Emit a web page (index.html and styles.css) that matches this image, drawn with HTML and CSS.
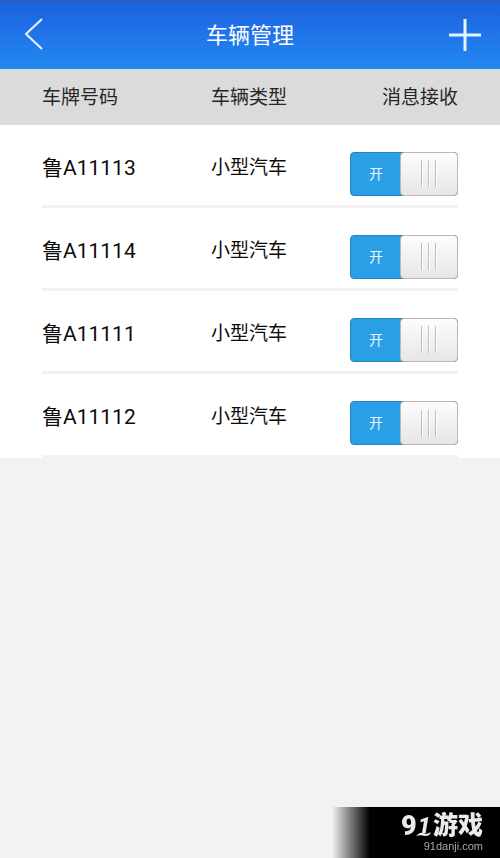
FILE: index.html
```html
<!DOCTYPE html>
<html lang="zh-CN">
<head>
<meta charset="utf-8">
<meta name="viewport" content="width=device-width, initial-scale=1">
<title>车辆管理</title>
<link rel="stylesheet" href="styles.css">
</head>
<body>
<header class="topbar">
  <button class="icon-btn" type="button" aria-label="返回">
    <svg width="20" height="34" viewBox="0 0 20 34"><path d="M17 1 L1 16 L17 31"/></svg>
  </button>
  <h1 class="title">车辆管理</h1>
  <button class="icon-btn" type="button" aria-label="添加">
    <svg class="plus" width="32" height="32" viewBox="0 0 32 32"><path d="M16 0V32M0 16H32"/></svg>
  </button>
</header>
<main class="panel">
  <table class="vehicles">
    <thead>
      <tr><th scope="col">车牌号码</th><th scope="col">车辆类型</th><th scope="col">消息接收</th></tr>
    </thead>
    <tbody>
      <tr>
        <td class="plate">鲁A11113</td><td>小型汽车</td>
        <td><label class="switch"><input type="checkbox" aria-label="鲁A11113 消息接收" checked><span class="state">开</span><span class="knob"><i></i><i></i><i></i></span></label></td>
      </tr>
      <tr>
        <td class="plate">鲁A11114</td><td>小型汽车</td>
        <td><label class="switch"><input type="checkbox" aria-label="鲁A11114 消息接收" checked><span class="state">开</span><span class="knob"><i></i><i></i><i></i></span></label></td>
      </tr>
      <tr>
        <td class="plate">鲁A11111</td><td>小型汽车</td>
        <td><label class="switch"><input type="checkbox" aria-label="鲁A11111 消息接收" checked><span class="state">开</span><span class="knob"><i></i><i></i><i></i></span></label></td>
      </tr>
      <tr>
        <td class="plate">鲁A11112</td><td>小型汽车</td>
        <td><label class="switch"><input type="checkbox" aria-label="鲁A11112 消息接收" checked><span class="state">开</span><span class="knob"><i></i><i></i><i></i></span></label></td>
      </tr>
    </tbody>
  </table>
</main>
<footer class="brand">
  <div class="brand-name">
    <svg width="32" height="38" viewBox="0 0 32 38">
      <text class="brand-nine" x="0" y="28">9</text>
      <text class="brand-one" x="17" y="26">1</text>
      <path d="M15 29c3-3 5-4 7-3 3 1 5 1 8-1-1 3-3 4-6 4-3-1-5-1-9 0z"/>
    </svg>
    <span>游戏</span>
  </div>
  <div class="brand-url">91danji.com</div>
</footer>
</body>
</html>
```
FILE: styles.css
```css
* { box-sizing: border-box; }

body {
  margin: 0;
  min-height: 100vh;
  background: #f2f2f2;
  color: #0c0c0c;
  font-family: Roboto, "Noto Sans CJK SC", sans-serif;
}

.topbar {
  display: flex;
  align-items: center;
  justify-content: space-between;
  height: 69px;
  padding: 0 16px;
  border-top: 1px solid #3557a0;
  background: linear-gradient(#1b62dc, #2070e8 40%, #2189f0);
  color: #fff;
}

.title {
  margin: 0;
  padding-top: 2px;
  font-size: 22px;
  font-weight: 400;
  line-height: 32px;
}

.icon-btn {
  display: flex;
  justify-content: center;
  align-items: center;
  width: 38px;
  height: 48px;
  padding: 0;
  border: 0;
  background: none;
}

.icon-btn svg {
  fill: none;
  stroke: #e6f6ff;
  stroke-width: 2;
}

.icon-btn .plus { stroke-width: 3; }

.panel { background: #fff; }

.vehicles {
  width: 100%;
  border-spacing: 0;
  table-layout: fixed;
}

.vehicles th,
.vehicles td {
  padding: 2px 0 0;
  font-size: 19px;
  font-weight: 400;
  line-height: 28px;
  text-align: left;
}

.vehicles th {
  height: 56px;
  background: #dbdbdb;
  color: #262626;
}

.vehicles th:first-child { width: 42.2%; }
.vehicles th:last-child { width: 32%; }

.vehicles th:first-child,
.vehicles td:first-child { padding-left: 42px; }

.vehicles th:last-child,
.vehicles td:last-child {
  padding-right: 42px;
  text-align: right;
}

.vehicles tbody tr {
  background: linear-gradient(#f2f2f2, #f2f2f2) center bottom / calc(100% - 84px) 3px no-repeat;
}

.vehicles td { height: 83px; }

.vehicles tbody tr:last-child td { height: 84px; }

.vehicles .plate { font-size: 21px; }

.vehicles td:last-child { padding-top: 14px; }

.switch {
  position: relative;
  display: inline-flex;
  width: 108px;
  height: 44px;
  border: 1px solid #2184c2;
  border-radius: 4px;
  background: #2b9fe6;
  vertical-align: middle;
}

.switch input {
  position: absolute;
  inset: 0;
  width: 100%;
  height: 100%;
  margin: 0;
  opacity: 0;
}

.state {
  flex: 1;
  color: #e8f6ff;
  font-size: 14px;
  line-height: 42px;
  text-align: center;
}

.knob {
  display: flex;
  align-items: center;
  justify-content: center;
  gap: 5px;
  width: 58px;
  margin: -1px;
  border: 1px solid #b9b9b9;
  border-radius: 4px;
  background: linear-gradient(#fdfdfd, #e6e6e6);
}

.knob i {
  width: 2px;
  height: 27px;
  border-left: 1px solid #bdbdbd;
  border-right: 1px solid #fff;
}

.brand {
  position: fixed;
  right: 0;
  bottom: 0;
  width: 168px;
  height: 51px;
  padding: 5px 17px 0 0;
  background: linear-gradient(to right, transparent, #000 38px);
  color: #ececec;
  text-align: right;
}

.brand-name {
  display: flex;
  align-items: center;
  justify-content: flex-end;
  height: 28px;
  font-size: 25px;
  font-weight: 900;
  line-height: 28px;
}

.brand-name svg { fill: #ececec; }

.brand-nine { font-size: 27px; }

.brand-one {
  font-size: 22px;
  font-style: italic;
}

.brand-url {
  color: #a8a8a8;
  font-family: "Liberation Sans", sans-serif;
  font-size: 11px;
  line-height: 12px;
}
```
